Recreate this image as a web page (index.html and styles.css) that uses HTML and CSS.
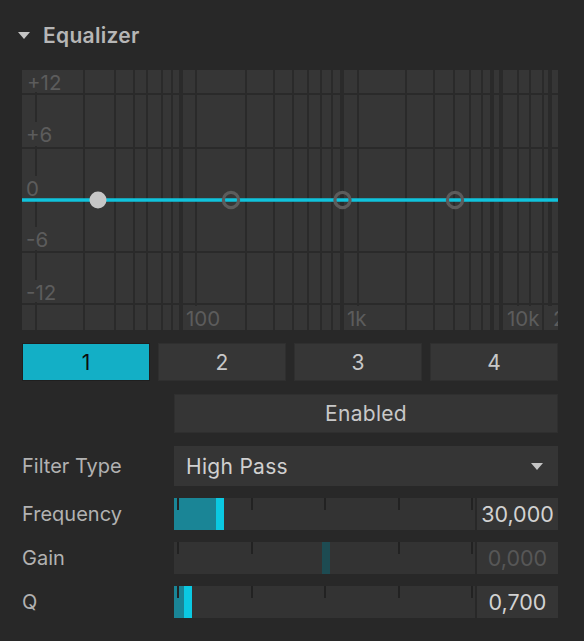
FILE: index.html
```html
<!DOCTYPE html>
<html lang="en">
<head>
	<meta charset="UTF-8">
	<title>Equalizer</title>
	<link rel="stylesheet" href="styles.css">
</head>
<body>
	<div class="eq">
		<div class="eq-head">
			<span class="caret"></span>
			<span>Equalizer</span>
		</div>

		<div class="eq-body">
			<!-- response graph: 536 x 260, log frequency on x, gain (dB) on y -->
			<svg class="graph" viewBox="0 0 536 260" width="536" height="260">
				<rect x="0" y="0" width="536" height="260" fill="#363636"/>
				<g stroke="#2a2a2a" stroke-width="2">
					<line x1="14" y1="0" x2="14" y2="260"/>
					<line x1="62" y1="0" x2="62" y2="260"/>
					<line x1="93" y1="0" x2="93" y2="260"/>
					<line x1="112" y1="0" x2="112" y2="260"/>
					<line x1="125" y1="0" x2="125" y2="260"/>
					<line x1="140" y1="0" x2="140" y2="260"/>
					<line x1="150" y1="0" x2="150" y2="260"/>
					<line x1="158" y1="0" x2="158" y2="260"/>
					<line x1="160" y1="0" x2="160" y2="260"/>
					<line x1="174" y1="0" x2="174" y2="260"/>
					<line x1="224" y1="0" x2="224" y2="260"/>
					<line x1="252" y1="0" x2="252" y2="260"/>
					<line x1="271" y1="0" x2="271" y2="260"/>
					<line x1="286" y1="0" x2="286" y2="260"/>
					<line x1="299" y1="0" x2="299" y2="260"/>
					<line x1="310" y1="0" x2="310" y2="260"/>
					<line x1="319" y1="0" x2="319" y2="260"/>
					<line x1="321" y1="0" x2="321" y2="260"/>
					<line x1="336" y1="0" x2="336" y2="260"/>
					<line x1="384" y1="0" x2="384" y2="260"/>
					<line x1="412" y1="0" x2="412" y2="260"/>
					<line x1="432" y1="0" x2="432" y2="260"/>
					<line x1="448" y1="0" x2="448" y2="260"/>
					<line x1="460" y1="0" x2="460" y2="260"/>
					<line x1="469" y1="0" x2="469" y2="260"/>
					<line x1="471" y1="0" x2="471" y2="260"/>
					<line x1="478" y1="0" x2="478" y2="260"/>
					<line x1="480" y1="0" x2="480" y2="260"/>
					<line x1="496" y1="0" x2="496" y2="260"/>
					<line x1="508" y1="0" x2="508" y2="260"/>
					<line x1="521" y1="0" x2="521" y2="260"/>
					<line x1="527" y1="0" x2="527" y2="260"/>
					<line x1="529" y1="0" x2="529" y2="260"/>

					<line x1="0" y1="24" x2="536" y2="24"/>
					<line x1="0" y1="78" x2="536" y2="78"/>
					<line x1="0" y1="130" x2="536" y2="130"/>
					<line x1="0" y1="182" x2="536" y2="182"/>
					<line x1="0" y1="234" x2="536" y2="234"/>
				</g>

				<!-- axis labels sit on their own patch of background -->
				<g fill="#363636">
					<rect x="0" y="0" width="46" height="22"/>
					<rect x="0" y="52" width="34" height="24"/>
					<rect x="0" y="106" width="24" height="22"/>
					<rect x="0" y="157" width="34" height="23"/>
					<rect x="0" y="210" width="46" height="22"/>
					<rect x="162" y="236" width="42" height="24"/>
					<rect x="323" y="236" width="24" height="24"/>
					<rect x="483" y="236" width="36" height="24"/>
					<rect x="525" y="236" width="11" height="24"/>
				</g>
				<g class="axis" fill="#5c5c5c">
					<text x="5" y="20">+12</text>
					<text x="4" y="72">+6</text>
					<text x="4" y="126">0</text>
					<text x="4" y="177">-6</text>
					<text x="4" y="230">-12</text>
					<text x="164" y="256">100</text>
					<text x="325" y="256">1k</text>
					<text x="485" y="256">10k</text>
					<text x="531" y="256">20k</text>
				</g>

				<line x1="0" y1="130" x2="536" y2="130" stroke="#10c3dc" stroke-width="3.5"/>
				<circle cx="76" cy="130" r="8.5" fill="#c6c6c6"/>
				<g fill="none" stroke="#5c5c5c" stroke-width="3.2">
					<circle cx="209" cy="130" r="7.6"/>
					<circle cx="320.5" cy="130" r="7.6"/>
					<circle cx="433" cy="130" r="7.6"/>
				</g>
			</svg>

			<div class="tabs">
				<div class="tab on">1</div>
				<div class="tab">2</div>
				<div class="tab">3</div>
				<div class="tab">4</div>
			</div>

			<div class="enable">Enabled</div>

			<div class="rows">
				<div class="label">Filter Type</div>
				<div class="select">
					<span>High Pass</span>
					<span class="arrow"></span>
				</div>

				<div class="label">Frequency</div>
				<div class="slider">
					<div class="track">
						<div class="fill" style="width:42px"></div>
						<div class="ticks"><i></i><i></i><i></i><i></i><i></i></div>
						<div class="knob" style="left:42px"></div>
					</div>
					<div class="value">30,000</div>
				</div>

				<div class="label">Gain</div>
				<div class="slider off">
					<div class="track">
						<div class="ticks"><i></i><i></i><i></i><i></i><i></i></div>
						<div class="knob" style="left:148px"></div>
					</div>
					<div class="value">0,000</div>
				</div>

				<div class="label">Q</div>
				<div class="slider">
					<div class="track">
						<div class="fill" style="width:10px"></div>
						<div class="ticks"><i></i><i></i><i></i><i></i><i></i></div>
						<div class="knob" style="left:10px"></div>
					</div>
					<div class="value">0,700</div>
				</div>
			</div>
		</div>
	</div>
</body>
</html>
```

FILE: styles.css
```css
body{margin: 0; background: #282828; font-family: Inter, "Noto Sans", sans-serif; width: 584px; height: 641px; overflow: hidden;}

.eq-head{height: 70px; display: flex; align-items: center; gap: 13px; padding-left: 18px; color: #b6b6b6; font-size: 21px; font-weight: 600; letter-spacing: 0.3px;}
.caret{width: 0; height: 0; border-left: 6px solid transparent; border-right: 6px solid transparent; border-top: 7px solid #c4c4c4;}

.eq-body{padding: 0 26px 0 22px;}

.graph{display: block; width: 536px; height: 260px;}
.graph .axis text{font-family: Inter, "Noto Sans", sans-serif; font-size: 20.5px;}

.tabs{display: grid; grid-template-columns: repeat(4, 1fr); gap: 8px; margin-top: 13px;}
.tab{height: 38px; box-sizing: border-box; border: 1px solid #2f2f2f; background: #363636; color: #c8c8c8; font-size: 21px; display: flex; align-items: center; justify-content: center;}
.tab.on{background: #13afc6; border-color: #1f1f1f; color: #0c0c0c;}

.enable{margin: 13px 0 0 152px; height: 39px; box-sizing: border-box; border: 1px solid #2f2f2f; background: #353535; color: #c8c8c8; font-size: 21px; letter-spacing: 0.3px; display: flex; align-items: center; justify-content: center;}

.rows{margin-top: 13px; display: grid; grid-template-columns: 152px 1fr; row-gap: 12px; align-items: center;}
.label{font-size: 20px; color: #b2b2b2;}

.select{height: 40px; background: #353535; display: flex; align-items: center; justify-content: space-between; padding: 0 15px 0 12px; font-size: 21px; letter-spacing: 0.3px; color: #d0d0d0;}
.arrow{width: 0; height: 0; border-left: 6px solid transparent; border-right: 6px solid transparent; border-top: 7px solid #c4c4c4;}

.slider{display: flex; gap: 2px; height: 32px;}
.track{flex: 0 0 301px; position: relative; background: #333;}
.fill{position: absolute; left: 0; top: 0; bottom: 0; background: #1a8596;}
.knob{position: absolute; top: 0; bottom: 0; width: 8px; background: #0bc9e2;}
.ticks{position: absolute; left: 3px; right: 2px; top: 0; height: 12px; display: flex; justify-content: space-between;}
.ticks i{width: 2px; height: 12px; background: #222;}
.value{flex: 1; background: #353535; display: flex; align-items: center; justify-content: center; font-size: 21.5px; color: #d2d2d2;}

.slider.off .knob{background: #1d4b52;}
.slider.off .value{color: #575757;}
```
